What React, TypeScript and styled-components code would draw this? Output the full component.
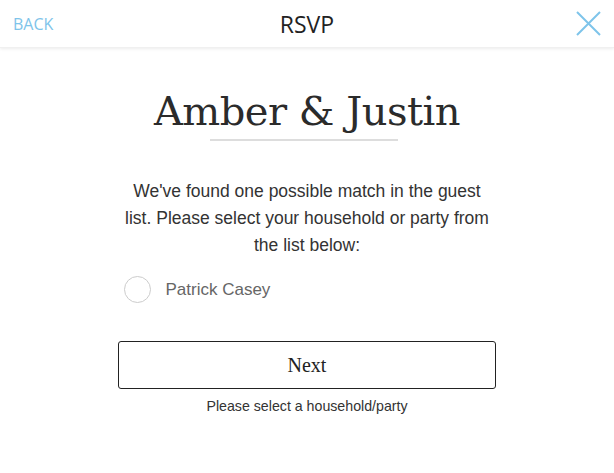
import React, { useState } from 'react';
import styled, { createGlobalStyle } from 'styled-components';

const GlobalStyle = createGlobalStyle`
    body {
        margin: 0;
        background: #ffffff;
        font-family: "Liberation Sans", Arial, sans-serif;
    }
`;

const Page = styled.div`
    width: 614px;
    min-height: 473px;
    display: flex;
    flex-direction: column;
`;

const Header = styled.header`
    height: 48px;
    display: flex;
    align-items: center;
    justify-content: space-between;
    padding: 0 13px;
    box-shadow: 0 1px 3px rgba(0, 0, 0, 0.08);
    border-bottom: 1px solid #f0f0f0;
    box-sizing: border-box;
    position: relative;
`;

const BackLink = styled.a`
    color: #7ec4ea;
    font-family: "Open Sans", "Liberation Sans", sans-serif;
    font-size: 16px;
    text-decoration: none;
    cursor: pointer;
    margin-top: 1px;
`;

const HeaderTitle = styled.h1`
    position: absolute;
    left: 0;
    right: 0;
    margin: 0;
    text-align: center;
    font-family: "Open Sans", "Liberation Sans", sans-serif;
    font-weight: 400;
    font-size: 23px;
    color: #222;
    pointer-events: none;
    top: 8px;
`;

const CloseButton = styled.button`
    background: none;
    border: none;
    padding: 0;
    cursor: pointer;
    display: flex;
`;

const Content = styled.main`
    display: flex;
    flex-direction: column;
    align-items: center;
    padding-top: 35px;
`;

const Couple = styled.h2`
    margin: 0;
    font-family: "DejaVu Serif", "Liberation Serif", serif;
    font-weight: 400;
    font-size: 40px;
    line-height: 56px;
    color: #2b2b2b;
    letter-spacing: -0.5px;
`;

const Divider = styled.hr`
    width: 188px;
    height: 2px;
    border: none;
    background: #dddddd;
    margin: 0 6px 0 0;
`;

const Message = styled.p`
    width: 370px;
    margin: 37px 0 0;
    text-align: center;
    font-size: 17.5px;
    line-height: 27px;
    color: #333;
`;

const Options = styled.div`
    width: 377px;
    margin-top: 17px;
    display: flex;
    flex-direction: column;
`;

const OptionRow = styled.label`
    display: flex;
    align-items: center;
    gap: 15px;
    padding-left: 5px;
    cursor: pointer;
`;

const Radio = styled.span<{ $checked: boolean }>`
    width: 25px;
    height: 25px;
    border-radius: 50%;
    border: 1px solid #cccccc;
    display: flex;
    align-items: center;
    justify-content: center;

    &::after {
        content: '';
        width: 13px;
        height: 13px;
        border-radius: 50%;
        background: ${p => (p.$checked ? '#7ec4ea' : 'transparent')};
    }
`;

const OptionName = styled.span`
    font-size: 17px;
    color: #666;
`;

const NextButton = styled.button`
    width: 378px;
    height: 48px;
    margin-top: 38px;
    background: #fff;
    border: 1px solid #222;
    border-radius: 3px;
    font-family: "Liberation Serif", "Times New Roman", serif;
    font-size: 20px;
    color: #222;
    cursor: pointer;
`;

const Hint = styled.p`
    margin: 9px 0 0;
    font-size: 14.2px;
    color: #333;
`;

const App: React.FC = () => {
    const [selected, setSelected] = useState(false);

    return (
        <Page>
            <GlobalStyle />
            <Header>
                <BackLink>BACK</BackLink>
                <HeaderTitle>RSVP</HeaderTitle>
                <CloseButton aria-label="Close">
                    <svg width="25" height="25" viewBox="0 0 25 25">
                        <path d="M1 1 L24 24 M24 1 L1 24" stroke="#7ec4ea" strokeWidth="2" fill="none" />
                    </svg>
                </CloseButton>
            </Header>
            <Content>
                <Couple>Amber &amp; Justin</Couple>
                <Divider />
                <Message>
                    We've found one possible match in the guest list. Please select your household or party from the list below:
                </Message>
                <Options>
                    <OptionRow onClick={() => setSelected(!selected)}>
                        <Radio $checked={selected} />
                        <OptionName>Patrick Casey</OptionName>
                    </OptionRow>
                </Options>
                <NextButton>Next</NextButton>
                <Hint>Please select a household/party</Hint>
            </Content>
        </Page>
    );
};

export default App;
